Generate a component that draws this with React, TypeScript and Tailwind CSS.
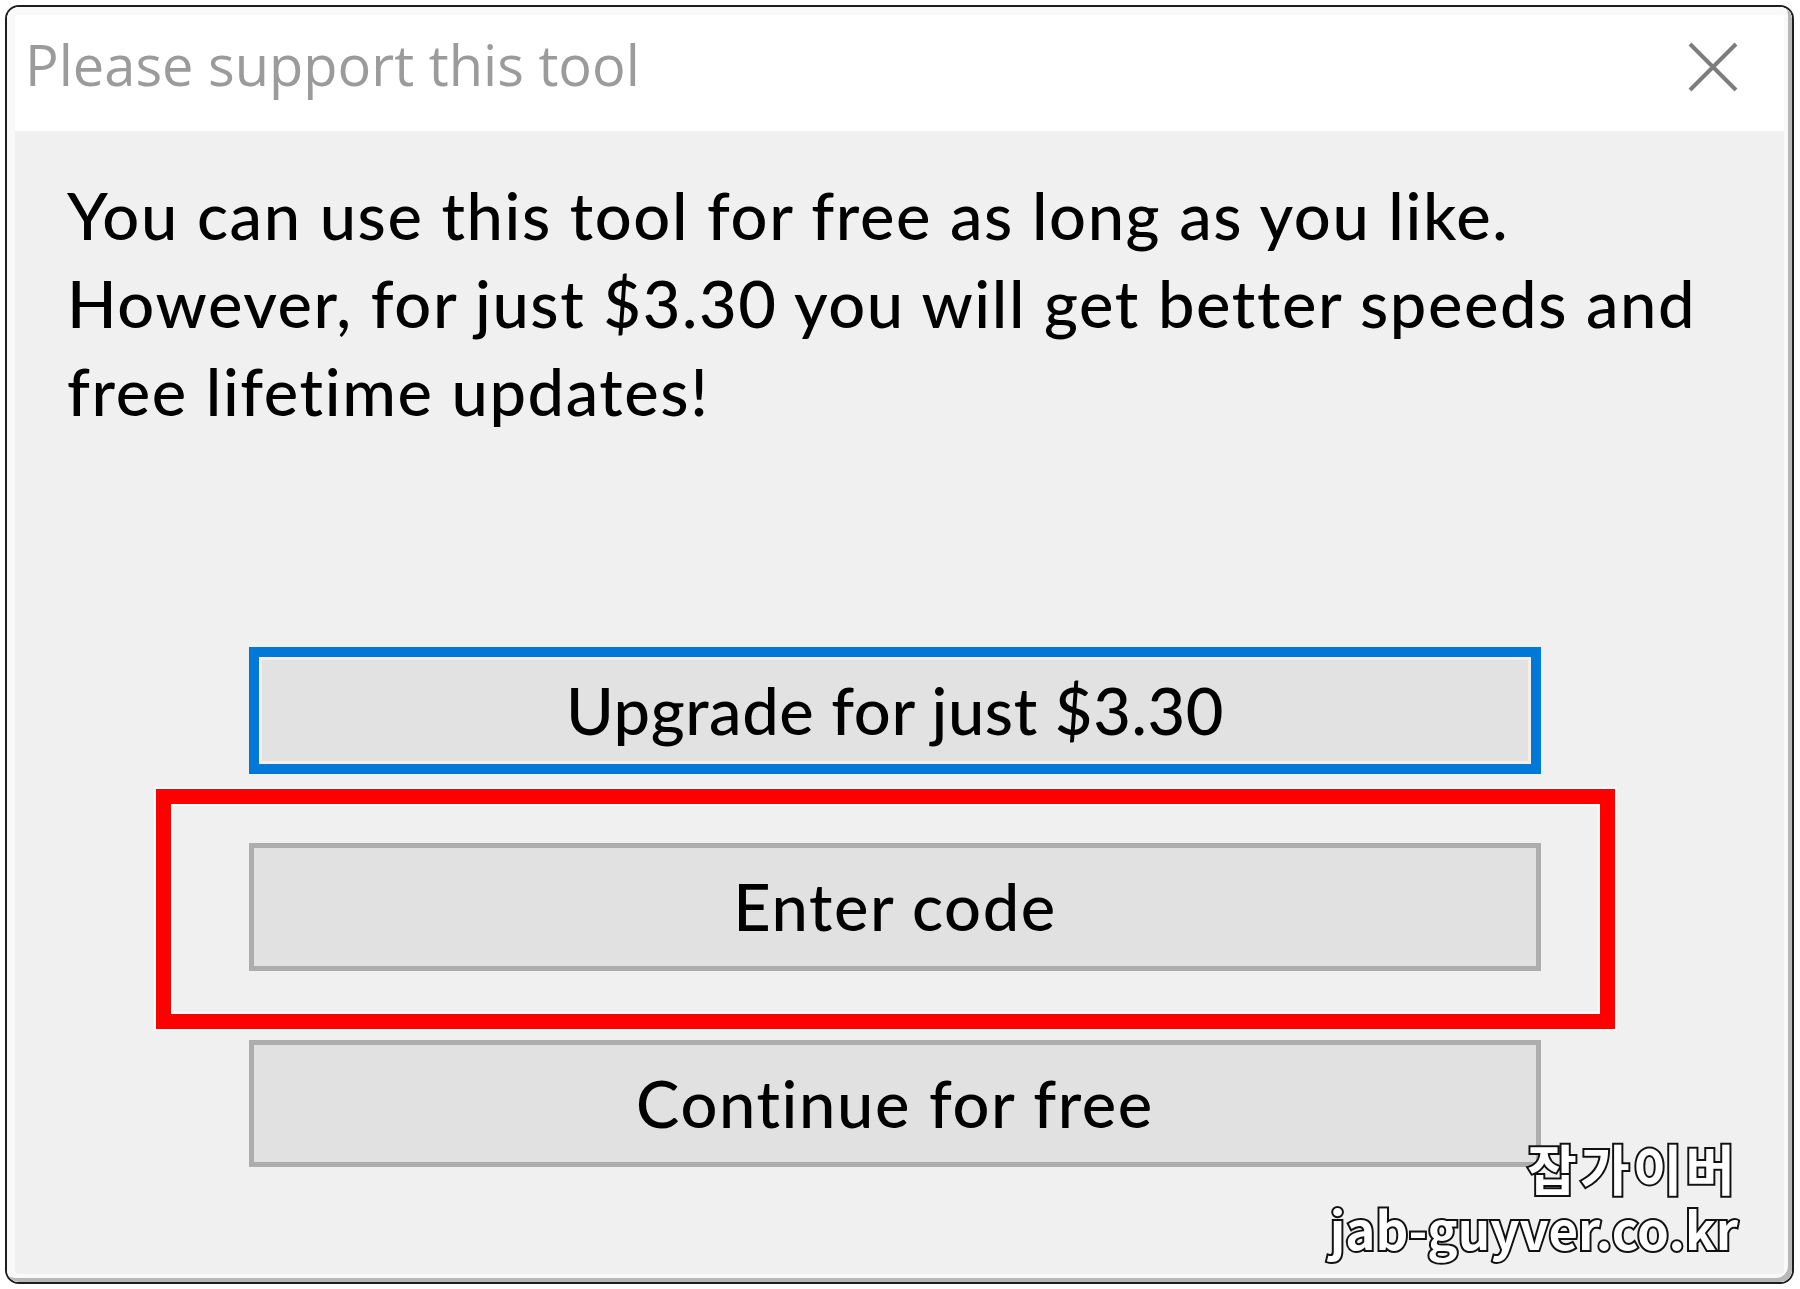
export default function App() {
	const font = "[font-family:'Lato',sans-serif] font-medium";
	return (
		<div className="h-[1289px] w-[1800px] bg-white pl-[5px] pt-[5px]">
			<div className="relative flex h-[1279px] w-[1789px] flex-col overflow-hidden rounded-[14px] border-2 border-[#1e1e1e]">
				{/* title bar */}
				<div className="flex h-[124px] shrink-0 items-start justify-between bg-white pl-[18px] pr-[54px]">
					<h1 className="pt-[29px] text-[56px] leading-[56px] text-[#9b9b9b] [font-family:'Open_Sans',sans-serif]">
						Please support this tool
					</h1>
					<svg className="mt-[35px]" width="50" height="50" viewBox="0 0 50 50">
						<path d="M2 2L48 48M48 2L2 48" stroke="#7d7d7d" strokeWidth="4" />
					</svg>
				</div>

				{/* content */}
				<div className="flex-1 bg-[#f0f0f0] pl-[60px] pt-[40px]">
					<p className={`whitespace-nowrap text-[65px] leading-[88px] tracking-[1.6px] text-black ${font}`}>
						You can use this tool for free as long as you like.
						<br />
						However, for just $3.30 you will get better speeds and
						<br />
						free lifetime updates!
					</p>

					<div className={`ml-[182px] mt-[212px] flex w-[1292px] flex-col gap-[69px] text-[65px] tracking-[1.6px] text-black ${font}`}>
						<button type="button" className="flex h-[127px] items-center justify-center border-[10px] border-[#0078d7] bg-[#e2e2e2] tracking-[0.6px] shadow-[inset_0_0_0_3px_#f5eee6]">
							Upgrade for just $3.30
						</button>
						<button type="button" className="flex h-[128px] items-center justify-center border-[5px] border-[#adadad] bg-[#e1e1e1]">
							Enter code
						</button>
						<button type="button" className="flex h-[127px] items-center justify-center border-[5px] border-[#adadad] bg-[#e1e1e1]">
							Continue for free
						</button>
					</div>
				</div>

				{/* red annotation box */}
				<div className="pointer-events-none absolute left-[149px] top-[782px] h-[240px] w-[1459px] border-[15px] border-[#ff0000] shadow-[0_0_0_2px_#f2fffd,inset_0_0_0_2px_#f2fffd]" />

				{/* watermark */}
				<div className="pointer-events-none absolute right-[54px] top-[1132px] flex flex-col items-end text-white [paint-order:stroke_fill] [-webkit-text-stroke:4px_#111] [font-family:'Noto_Sans_CJK_KR',sans-serif]">
					<span className="text-[54px] font-bold leading-[58px] tracking-[3px]">잡가이버</span>
					<span className="text-[51px] font-bold leading-[62px]">jab-guyver.co.kr</span>
				</div>

				{/* screenshot frame edge */}
				<div className="pointer-events-none absolute inset-0 rounded-[12px] shadow-[inset_-4px_-4px_0_#b8b8b8,inset_0_0_0_8px_#f9f9f9]" />
			</div>
		</div>
	);
}
